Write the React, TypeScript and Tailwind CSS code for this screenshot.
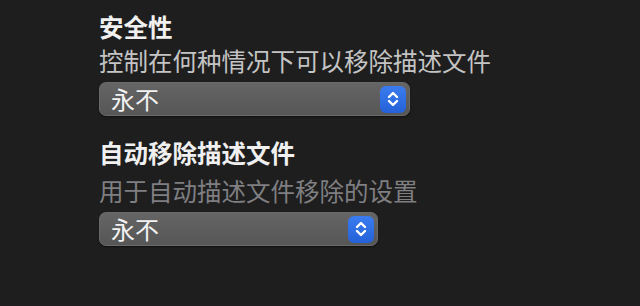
function Chevrons() {
  return (
    <svg width="14" height="18" viewBox="0 0 14 18" fill="none">
      <path d="M3 7 L7 3 L11 7" stroke="white" strokeWidth="2.4" strokeLinecap="round" strokeLinejoin="round" />
      <path d="M3 11 L7 15 L11 11" stroke="white" strokeWidth="2.4" strokeLinecap="round" strokeLinejoin="round" />
    </svg>
  );
}

function Select({ value, width }: { value: string; width: string }) {
  return (
    <div
      className={`${width} h-[34px] flex items-center justify-between rounded-[7px] bg-gradient-to-b from-[#656565] to-[#565656] border border-[#6a6a6a] pl-[11px] pr-[3px] shadow-[0_1px_2px_rgba(0,0,0,0.5)]`}
    >
      <span className="text-[24px] leading-none text-[#f2f2f2]">{value}</span>
      <div className="w-[26px] h-[27px] rounded-[6px] bg-gradient-to-b from-[#3a7cf0] to-[#2561d8] flex items-center justify-center">
        <Chevrons />
      </div>
    </div>
  );
}

export default function App() {
  return (
    <div
      className="w-[640px] h-[306px] bg-[#1e1e1e] pl-[99px] pt-[12px] flex flex-col"
      style={{ fontFamily: '"Noto Sans CJK SC", "Noto Sans", sans-serif' }}
    >
      <div className="h-[30px] flex items-center text-[24.5px] font-bold text-[#f0f0f0]">安全性</div>
      <div className="h-[30px] mt-[4px] flex items-center text-[24.5px] text-[#c4c4c4]">
        控制在何种情况下可以移除描述文件
      </div>
      <div className="mt-[6px]">
        <Select value="永不" width="w-[311px]" />
      </div>
      <div className="h-[30px] mt-[22px] flex items-center text-[24.5px] font-bold text-[#f0f0f0]">
        自动移除描述文件
      </div>
      <div className="h-[30px] mt-[8px] flex items-center text-[24.5px] text-[#7f7f82]">
        用于自动描述文件移除的设置
      </div>
      <div className="mt-[6px]">
        <Select value="永不" width="w-[279px]" />
      </div>
    </div>
  );
}
